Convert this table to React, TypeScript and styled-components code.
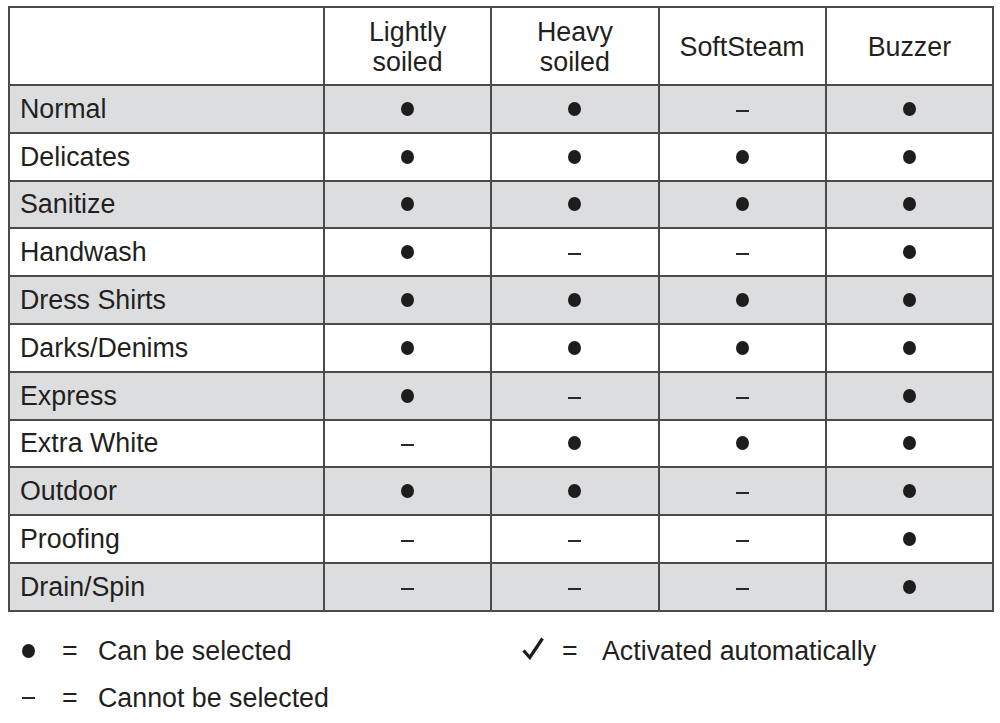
import React from "react";
import styled, { createGlobalStyle } from "styled-components";

const Global = createGlobalStyle`
  html, body { margin: 0; padding: 0; background: #ffffff; }
  body { font-family: "Liberation Sans", Arial, Helvetica, sans-serif; color: #231f20; }
`;

const Page = styled.div`
  width: 1000px;
  height: 723px;
  box-sizing: border-box;
  padding: 6px 0 0 8px;
  overflow: hidden;
`;

const Table = styled.table`
  border-collapse: collapse;
  width: 986px;
  table-layout: fixed;
  font-size: 26.8px;
  border: 2px solid #4b4b4b;
`;

const HeadCell = styled.th`
  height: 74px;
  padding: 2px 0 0;
  font-weight: 400;
  line-height: 30px;
  text-align: center;
  vertical-align: middle;
  border: 2px solid #4b4b4b;
  background: #ffffff;
`;

const Row = styled.tr<{ $shaded: boolean }>`
  height: 47.8px;
  background: ${(p) => (p.$shaded ? "#dcdddf" : "#ffffff")};
`;

const LabelCell = styled.td`
  padding: 0 0 0 10px;
  text-align: left;
  vertical-align: middle;
  border: 2px solid #4b4b4b;
  line-height: 26px;
`;

const MarkCell = styled.td`
  padding: 0;
  vertical-align: middle;
  border: 2px solid #4b4b4b;
`;

const Dot = styled.span`
  display: block;
  width: 13px;
  height: 14px;
  margin: 0 auto;
  border-radius: 50%;
  background: #1e1c1d;
`;

const Dash = styled.span`
  display: block;
  width: 13px;
  height: 2px;
  margin: 4px auto 0;
  background: #2a2829;
`;

const Legend = styled.div`
  display: grid;
  grid-template-columns: 500px 1fr;
  grid-auto-rows: 47px;
  margin-top: 16px;
  font-size: 26.8px;
`;

const LegendItem = styled.div<{ $eqWidth: number }>`
  display: flex;
  align-items: center;
  padding-left: 14px;
  --eq: ${(p) => p.$eqWidth}px;
`;

const Symbol = styled.span`
  width: 40px;
  display: flex;
  align-items: center;
  & > span { margin: 0; }
`;

const Equals = styled.span`
  width: var(--eq);
`;

const LegendText = styled.span`
  white-space: nowrap;
`;

const Check = () => (
  <svg width="22" height="23" viewBox="0 0 22 23" style={{ display: "block", marginTop: "-6px" }}>
    <path d="M1.5 13.5 L7.8 20.5 L20.5 1.5" fill="none" stroke="#1e1c1d" strokeWidth="3.2" strokeLinejoin="miter" strokeLinecap="butt" />
  </svg>
);

type Mark = "y" | "n";

const headers: string[][] = [["Lightly", "soiled"], ["Heavy", "soiled"], ["SoftSteam"], ["Buzzer"]];

const rows: [string, Mark[]][] = [
  ["Normal", ["y", "y", "n", "y"]],
  ["Delicates", ["y", "y", "y", "y"]],
  ["Sanitize", ["y", "y", "y", "y"]],
  ["Handwash", ["y", "n", "n", "y"]],
  ["Dress Shirts", ["y", "y", "y", "y"]],
  ["Darks/Denims", ["y", "y", "y", "y"]],
  ["Express", ["y", "n", "n", "y"]],
  ["Extra White", ["n", "y", "y", "y"]],
  ["Outdoor", ["y", "y", "n", "y"]],
  ["Proofing", ["n", "n", "n", "y"]],
  ["Drain/Spin", ["n", "n", "n", "y"]],
];

export default function App() {
  return (
    <Page>
      <Global />
      <Table>
        <colgroup>
          <col style={{ width: "315px" }} />
          <col />
          <col />
          <col />
          <col />
        </colgroup>
        <thead>
          <tr>
            <HeadCell />
            {headers.map((h, i) => (
              <HeadCell key={i}>
                {h.map((line, j) => (
                  <React.Fragment key={j}>
                    {j > 0 && <br />}
                    {line}
                  </React.Fragment>
                ))}
              </HeadCell>
            ))}
          </tr>
        </thead>
        <tbody>
          {rows.map(([label, marks], i) => (
            <Row key={label} $shaded={i % 2 === 0}>
              <LabelCell>{label}</LabelCell>
              {marks.map((m, j) => (
                <MarkCell key={j}>{m === "y" ? <Dot /> : <Dash />}</MarkCell>
              ))}
            </Row>
          ))}
        </tbody>
      </Table>
      <Legend>
        <LegendItem $eqWidth={36}>
          <Symbol><Dot /></Symbol>
          <Equals>=</Equals>
          <LegendText>Can be selected</LegendText>
        </LegendItem>
        <LegendItem $eqWidth={40}>
          <Symbol><Check /></Symbol>
          <Equals>=</Equals>
          <LegendText>Activated automatically</LegendText>
        </LegendItem>
        <LegendItem $eqWidth={36}>
          <Symbol><Dash /></Symbol>
          <Equals>=</Equals>
          <LegendText>Cannot be selected</LegendText>
        </LegendItem>
      </Legend>
    </Page>
  );
}
